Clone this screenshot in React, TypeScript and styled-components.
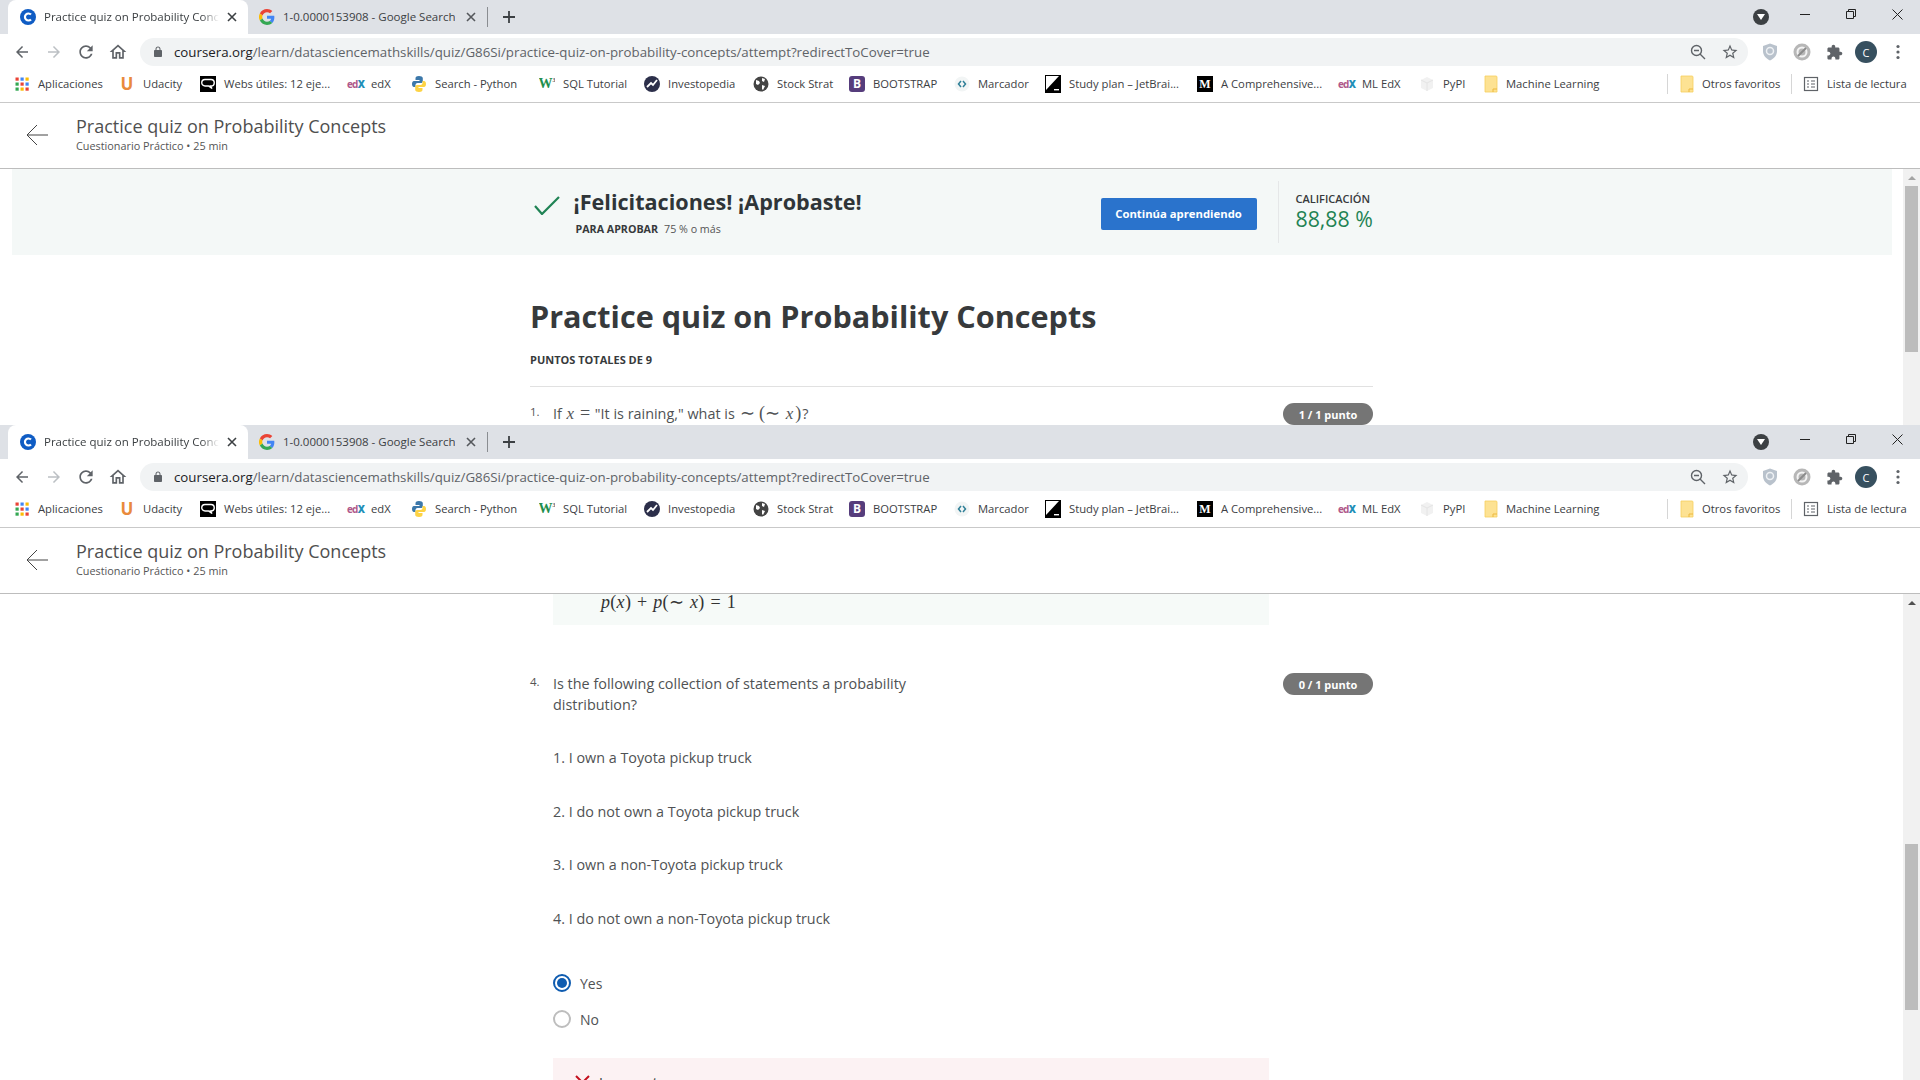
import React from "react";
import styled, { createGlobalStyle } from "styled-components";

const Global = createGlobalStyle`
  html, body { margin: 0; padding: 0; background: #fff; overflow: hidden; }
  body { font-family: "Open Sans", "Noto Sans", sans-serif; }
  * { box-sizing: border-box; }
`;

const Page = styled.div`
  width: 1920px;
  height: 1080px;
  display: flex;
  flex-direction: column;
  overflow: hidden;
`;
const Window = styled.section<{ $h: number }>`
  height: ${(p) => p.$h}px;
  flex: none;
  display: flex;
  flex-direction: column;
  overflow: hidden;
  background: #fff;
`;
const TabStrip = styled.div`
  height: 34px;
  flex: none;
  background: #dee1e6;
  display: flex;
  align-items: stretch;
  padding-left: 8px;
`;
const ActiveTab = styled.div`
  width: 240px;
  height: 34px;
  background: #fff;
  border-radius: 8px 8px 0 0;
  display: flex;
  align-items: center;
  padding-left: 12px;
  gap: 8px;
  font-size: 11.5px;
  color: #3c4043;
  position: relative;
  white-space: nowrap;
`;
const Tab = styled(ActiveTab)`
  background: transparent;
  width: 239px;
  padding-left: 11px;
`;
const TabLabel = styled.span<{ $w: number; $fade?: boolean }>`
  width: ${(p) => p.$w}px;
  overflow: hidden;
  flex: none;
  margin-top: -1px;
  ${(p) => (p.$fade ? "margin-right: -3px; -webkit-mask-image: linear-gradient(to right, #000 90%, transparent 100%);" : "")}
`;
const TabClose = styled.span`
  display: flex;
  width: 12px;
  height: 12px;
  flex: none;
  margin-left: 2px;
`;
const TabDivider = styled.div`
  width: 1px;
  height: 20px;
  background: #8a8d91;
  align-self: center;
  flex: none;
`;
const NewTab = styled.div`
  width: 42px;
  flex: none;
  display: flex;
  align-items: center;
  justify-content: center;
`;
const Controls = styled.div`
  margin-left: auto;
  display: flex;
  align-items: flex-start;
`;
const ProfileDrop = styled.div`
  width: 16px;
  height: 16px;
  border-radius: 50%;
  background: #3c4043;
  margin: 9px 13px 0 0;
  display: flex;
  align-items: center;
  justify-content: center;
`;
const WinBtn = styled.div`
  width: 46px;
  height: 28px;
  display: flex;
  align-items: center;
  justify-content: center;
`;
const NavBar = styled.div`
  height: 36px;
  flex: none;
  display: flex;
  align-items: center;
  padding: 0 5px 0 6px;
  background: #fff;
`;
const NavSlot = styled.div`
  width: 32px;
  height: 28px;
  flex: none;
  display: flex;
  align-items: center;
  justify-content: center;
`;
const Omnibox = styled.div`
  width: 1608px;
  height: 28px;
  margin: 0 6px;
  flex: none;
  border-radius: 14px;
  background: #f1f3f4;
  display: flex;
  align-items: center;
  padding: 0 9px 0 12px;
  gap: 10px;
  font-size: 13.3px;
  color: #5f6368;
  white-space: nowrap;
`;
const Host = styled.span`
  color: #202124;
`;
const OmniEnd = styled.div`
  margin-left: auto;
  display: flex;
  align-items: center;
  gap: 15px;
`;
const Avatar = styled.div`
  width: 22px;
  height: 22px;
  border-radius: 50%;
  background: #37505f;
  color: #fff;
  font-size: 11px;
  display: flex;
  align-items: center;
  justify-content: center;
`;
const BookmarkBar = styled.div`
  height: 33px;
  flex: none;
  display: flex;
  align-items: center;
  padding: 0 0 5px 14px;
  border-bottom: 1px solid #c9c9c9;
  background: #fff;
`;
const Bookmark = styled.div<{ $w: number }>`
  width: ${(p) => p.$w}px;
  flex: none;
  display: flex;
  align-items: center;
  gap: 8px;
  font-size: 11.25px;
  color: #3c4043;
  white-space: nowrap;
`;
const BookmarkSep = styled.div<{ $after: number }>`
  width: 1px;
  height: 20px;
  flex: none;
  background: #d6d6d6;
  margin-right: ${(p) => p.$after}px;
`;
const BIcon = styled.span<{ $bg: string; $c: string; $serif?: boolean; $r?: number; $fs?: number }>`
  width: 16px;
  height: 16px;
  flex: none;
  display: flex;
  align-items: center;
  justify-content: center;
  background: ${(p) => p.$bg};
  color: ${(p) => p.$c};
  border-radius: ${(p) => p.$r ?? 0}px;
  font-family: ${(p) => (p.$serif ? '"Liberation Serif", serif' : '"Open Sans", sans-serif')};
  font-weight: 700;
  font-size: ${(p) => p.$fs ?? 12}px;
  line-height: 1;
  overflow: hidden;
`;
const Sup = styled.span`
  font-size: 6px;
  color: #555;
  align-self: flex-start;
  margin-top: 1px;
`;
const EdxIcon = styled.span`
  width: 16px;
  flex: none;
  font-size: 10px;
  font-weight: 700;
  letter-spacing: -0.8px;
  color: #b0588a;
  line-height: 16px;
  & b { color: #1f8fb8; }
`;
const SvgBox = styled.svg`
  display: block;
  flex: none;
`;
const TopHeader = styled.header`
  height: 66px;
  flex: none;
  display: flex;
  align-items: flex-start;
  border-bottom: 1px solid #bdbdbd;
  background: #fff;
  padding-left: 26px;
`;
const BackArrow = styled.div`
  width: 22px;
  margin-top: 21px;
  flex: none;
`;
const HeaderText = styled.div`
  margin: 11px 0 0 28px;
  display: flex;
  flex-direction: column;
`;
const HeaderTitle = styled.div`
  font-size: 18px;
  line-height: 24px;
  color: #4f4f4f;
`;
const HeaderSub = styled.div`
  font-size: 10.85px;
  line-height: 15px;
  color: #555;
`;
const Body = styled.div`
  flex: 1;
  min-height: 0;
  display: flex;
  overflow: hidden;
`;
const Scroll = styled.div`
  flex: 1;
  min-width: 0;
  overflow: hidden;
`;
const Track = styled.div`
  width: 17px;
  flex: none;
  background: #f1f1f1;
  display: flex;
  flex-direction: column;
  align-items: center;
`;
const Up = styled.div<{ $c: string }>`
  width: 0;
  height: 0;
  margin-top: 7px;
  border-left: 4px solid transparent;
  border-right: 4px solid transparent;
  border-bottom: 4px solid ${(p) => p.$c};
  flex: none;
`;
const Thumb = styled.div<{ $top: number; $h: number }>`
  width: 13px;
  height: ${(p) => p.$h}px;
  margin-top: ${(p) => p.$top}px;
  background: #bcbcbc;
  flex: none;
`;
const Banner = styled.div`
  height: 86px;
  margin: 0 11px 0 12px;
  background: #f4f8f7;
`;
const Col = styled.div`
  width: 843px;
  margin: 0 auto;
`;
const BannerInner = styled(Col)`
  height: 86px;
  display: flex;
  align-items: flex-start;
`;
const Check = styled.div`
  width: 43px;
  flex: none;
  padding: 27px 0 0 3px;
`;
const BannerText = styled.div`
  display: flex;
  flex-direction: column;
  padding-top: 16px;
`;
const BannerTitle = styled.div`
  font-size: 21.6px;
  line-height: 34px;
  font-weight: 700;
  color: #2f3538;
`;
const Pass = styled.div`
  margin: 3px 0 0 2px;
  font-size: 10.7px;
  line-height: 15px;
  color: #555;
  & b { color: #373a3c; font-weight: 700; margin-right: 6px; }
`;
const Cta = styled.button`
  margin: 29px 0 0 auto;
  width: 156px;
  height: 32px;
  border: 0;
  border-radius: 2px;
  background: #2a73cc;
  color: #fff;
  font: 700 11.3px "Open Sans", sans-serif;
  padding: 0 0 2px;
  flex: none;
`;
const Grade = styled.div`
  margin: 12px 0 0 21px;
  height: 62px;
  width: 96px;
  border-left: 1px solid #e5e7e8;
  padding: 11px 0 0 17px;
  flex: none;
`;
const GradeLabel = styled.div`
  font-size: 11px;
  font-weight: 600;
  line-height: 13px;
  color: #373a3c;
  white-space: nowrap;
`;
const GradeValue = styled.div`
  font-size: 21.3px;
  line-height: 28px;
  color: #1f8354;
  white-space: nowrap;
`;
const H1 = styled.h1`
  margin: 38px 0 0;
  font-size: 30.6px;
  line-height: 46px;
  font-weight: 700;
  color: #373a3c;
  white-space: nowrap;
`;
const Total = styled.div`
  margin-top: 13px;
  font-size: 11px;
  font-weight: 700;
  line-height: 16px;
  color: #373a3c;
`;
const Rule = styled.hr`
  margin: 18px 0 0;
  border: 0;
  border-top: 1px solid #e1e1e1;
`;
const QRow = styled.div<{ $top: number }>`
  margin-top: ${(p) => p.$top}px;
  display: flex;
  align-items: flex-start;
`;
const QNum = styled.div`
  width: 23px;
  flex: none;
  font-size: 11.5px;
  line-height: 17px;
  color: #555;
`;
const QText = styled.div<{ $w: number }>`
  width: ${(p) => p.$w}px;
  font-size: 14.4px;
  line-height: 21px;
  color: #4f5254;
`;
const Badge = styled.div`
  margin-left: auto;
  width: 90px;
  height: 22px;
  border-radius: 11px;
  background: #757575;
  color: #fff;
  font-size: 11px;
  font-weight: 700;
  display: flex;
  align-items: center;
  justify-content: center;
  flex: none;
`;
const Mi = styled.i`
  font-family: "Liberation Serif", serif;
  font-size: 17px;
  margin: 0 1px;
`;
const Mn = styled.span`
  font-family: "Liberation Serif", serif;
  font-size: 18px;
  margin: 0 1px;
`;
const Feedback = styled.div`
  margin-left: 23px;
  width: 716px;
  height: 31px;
  padding-left: 48px;
  background: #f6faf8;
  font-family: "Liberation Serif", serif;
  font-size: 18px;
  line-height: 16px;
  letter-spacing: 0.3px;
  word-spacing: 1px;
  color: #333;
`;
const Indented = styled.div`
  margin-left: 23px;
  width: 716px;
`;
const Statement = styled.p`
  margin: 32.4px 0 0;
  font-size: 14.35px;
  line-height: 21px;
  color: #4f5254;
`;
const Options = styled.div`
  margin-top: 37px;
`;
const Option = styled.div`
  height: 36px;
  display: flex;
  align-items: center;
  gap: 9px;
  font-size: 14px;
  color: #4f5254;
`;
const Radio = styled.span<{ $on?: boolean }>`
  width: 18px;
  height: 18px;
  border-radius: 50%;
  border: 2px solid ${(p) => (p.$on ? "#0f5cb0" : "#bdbdbd")};
  flex: none;
  margin-top: -2px;
  display: flex;
  align-items: center;
  justify-content: center;
  &::after {
    content: "";
    width: 10px;
    height: 10px;
    border-radius: 50%;
    background: ${(p) => (p.$on ? "#0f5cb0" : "transparent")};
  }
`;
const Wrong = styled.div`
  margin-top: 20px;
  height: 60px;
  background: #fcf2f3;
  padding: 17px 0 0 22px;
  display: flex;
  gap: 9px;
  font-size: 14px;
  line-height: 21px;
  color: #373a3c;
`;
const WrongLabel = styled.span`
  margin-top: -3px;
`;

const I = ({ d, size = 16, fill = "#5f6368", vb = 24 }: { d: string; size?: number; fill?: string; vb?: number }) => (
  <SvgBox width={size} height={size} viewBox={`0 0 ${vb} ${vb}`}><path d={d} fill={fill} /></SvgBox>
);
const P = {
  back: "M20 11H7.830l5.590-5.590L12 4l-8 8 8 8 1.410-1.410L7.830 13H20v-2z",
  fwd: "M4 11h12.170l-5.590-5.590L12 4l8 8-8 8-1.410-1.410L16.170 13H4v-2z",
  reload: "M17.650 6.350C16.200 4.900 14.210 4 12 4c-4.420 0-7.990 3.580-7.990 8s3.570 8 7.990 8c3.730 0 6.840-2.550 7.730-6h-2.080c-.82 2.330-3.040 4-5.650 4-3.310 0-6-2.690-6-6s2.690-6 6-6c1.660 0 3.140.69 4.220 1.780L13 11h7V4l-2.350 2.350z",
  home: "M12 5.690l5 4.500V18h-2v-6H9v6H7v-7.810l5-4.500M12 3L2 12h3v8h6v-6h2v6h6v-8h3L12 3z",
  lock: "M18 8h-1V6c0-2.760-2.240-5-5-5S7 3.240 7 6v2H6c-1.100 0-2 .9-2 2v10c0 1.100.9 2 2 2h12c1.100 0 2-.9 2-2V10c0-1.100-.9-2-2-2zm-6-5c1.660 0 3 1.340 3 3v2H9V6c0-1.660 1.340-3 3-3z",
  star: "M22 9.240l-7.190-.62L12 2 9.190 8.630 2 9.240l5.460 4.730L5.820 21 12 17.270 18.180 21l-1.630-7.030L22 9.240zM12 15.400l-3.760 2.270 1-4.280-3.320-2.880 4.380-.38L12 6.100l1.710 4.040 4.380.38-3.320 2.880 1 4.280L12 15.400z",
  puzzle: "M20.500 11H19V7c0-1.100-.9-2-2-2h-4V3.500C13 2.120 11.880 1 10.500 1S8 2.120 8 3.500V5H4c-1.100 0-1.990.9-1.990 2v3.800H3.500c1.490 0 2.700 1.210 2.700 2.700s-1.210 2.700-2.700 2.700H2V20c0 1.100.9 2 2 2h3.800v-1.500c0-1.490 1.210-2.700 2.700-2.700 1.490 0 2.700 1.210 2.700 2.700V22H17c1.100 0 2-.9 2-2v-4h1.500c1.380 0 2.500-1.120 2.500-2.500S21.880 11 20.500 11z",
};
const Stroke = ({ d, size = 12, vb = 12, c = "#3c4043", w = 1.6 }: { d: string; size?: number; vb?: number; c?: string; w?: number }) => (
  <SvgBox width={size} height={size} viewBox={`0 0 ${vb} ${vb}`}><path d={d} fill="none" stroke={c} strokeWidth={w} /></SvgBox>
);
const CourseraFav = () => (
  <SvgBox width={16} height={16} viewBox="0 0 16 16">
    <circle cx="8" cy="8" r="8" fill="#0f5cc4" />
    <path d="M11 5.600A3.500 3.500 0 1 0 11 10.400" fill="none" stroke="#fff" strokeWidth="2.200" />
  </SvgBox>
);
const GoogleFav = () => (
  <SvgBox width={16} height={16} viewBox="0 0 48 48">
    <path fill="#EA4335" d="M24 9.500c3.500 0 6.700 1.200 9.200 3.600l6.900-6.900C35.900 2.400 30.500 0 24 0 14.600 0 6.500 5.400 2.600 13.200l8 6.200C12.500 13.700 17.800 9.500 24 9.500z" />
    <path fill="#4285F4" d="M46.100 24.500c0-1.600-.1-3.100-.4-4.500H24v9h12.400c-.5 2.900-2.200 5.300-4.600 7l7.700 6c4.500-4.200 6.600-10.300 6.600-17.500z" />
    <path fill="#FBBC05" d="M10.500 28.600A14.500 14.500 0 0 1 10.500 19.400l-8-6.200a24 24 0 0 0 0 21.600l8-6.200z" />
    <path fill="#34A853" d="M24 48c6.500 0 11.900-2.100 15.900-5.800l-7.700-6c-2.200 1.400-4.900 2.300-8.200 2.300-6.200 0-11.500-4.200-13.400-9.900l-8 6.200C6.500 42.600 14.600 48 24 48z" />
  </SvgBox>
);
const Apps = () => (
  <SvgBox width={16} height={16} viewBox="0 0 16 16">
    {[0, 1, 2].map((r) => [0, 1, 2].map((c) => (
      <rect key={`${r}${c}`} x={1.5 + c * 5} y={1.5 + r * 5} width="3.2" height="3.2"
        fill={[["#ea4335", "#4285f4", "#fbbc05"], ["#34a853", "#ea4335", "#4285f4"], ["#34a853", "#fbbc05", "#ea4335"]][r][c]} />
    )))}
  </SvgBox>
);
const Folder = () => (
  <SvgBox width={14} height={18} viewBox="0 0 14 18">
    <path d="M1 1h11a1 1 0 0 1 1 1v15H1z" fill="#fde293" stroke="#f6cf5e" strokeWidth=".8" />
    <path d="M9 17v-3h4" fill="none" stroke="#ecb93e" strokeWidth="1" />
  </SvgBox>
);
const Python = () => (
  <SvgBox width={16} height={18} viewBox="0 0 16 18">
    <path d="M8 1C5 1 4.500 2 4.500 3.500V5H8.500V6H3C1.500 6 1 7.500 1 9s.5 3 2 3h1.500v-2c0-1.200 1-2 2-2h3.500c1 0 1.800-.8 1.800-1.800V3C11.800 1.700 10 1 8 1z" fill="#3c78aa" />
    <path d="M8 17c3 0 3.500-1 3.500-2.500V13H7.500v-1H13c1.500 0 2-1.500 2-3s-.5-3-2-3h-1.500v2c0 1.200-1 2-2 2H6c-1 0-1.800.8-1.800 1.800V15c0 1.300 1.800 2 3.800 2z" fill="#fdd344" />
  </SvgBox>
);
const Bubble = () => (
  <SvgBox width={16} height={16} viewBox="0 0 16 16">
    <rect width="16" height="16" fill="#000" />
    <path d="M5 3.500h6a2.800 2.800 0 0 1 0 6.500h-.5l1.500 2.500-3.500-2.500H5a2.800 2.800 0 0 1 0-6.500z" fill="none" stroke="#fff" strokeWidth="1.400" />
  </SvgBox>
);
const Globe = () => (
  <SvgBox width={16} height={16} viewBox="0 0 16 16">
    <circle cx="8" cy="8" r="7.500" fill="#444" />
    <path d="M3 4l3 1 1 2-2 2-2-1zM9 2l3 1-1 3-2-1zM9 9l3 1-2 4-1-1z" fill="#fff" />
  </SvgBox>
);
const Invest = () => (
  <SvgBox width={16} height={16} viewBox="0 0 16 16">
    <circle cx="8" cy="8" r="8" fill="#2c2f4a" />
    <path d="M3 11l4-4 2 2 4-5" fill="none" stroke="#fff" strokeWidth="1.800" />
  </SvgBox>
);
const Marcador = () => (
  <SvgBox width={16} height={16} viewBox="0 0 16 16">
    <circle cx="8" cy="8" r="7.500" fill="#f2f5f5" />
    <path d="M7 5L4.500 8 7 11M9 5l2.500 3L9 11" fill="none" stroke="#2f7f97" strokeWidth="1.500" />
  </SvgBox>
);
const Study = () => (
  <SvgBox width={16} height={18} viewBox="0 0 16 18">
    <rect width="16" height="18" y="0" fill="#000" />
    <path d="M1 1h13L1 15z" fill="#fff" />
    <rect x="9" y="14" width="5" height="1.400" fill="#fff" />
  </SvgBox>
);
const Pypi = () => (
  <SvgBox width={16} height={16} viewBox="0 0 16 16">
    <path d="M2 4l6-3 6 3v8l-6 3-6-3z" fill="#f1f1f1" />
    <path d="M2 4l6 3 6-3M8 7v8" fill="none" stroke="#e4e4e4" />
  </SvgBox>
);
const ListIcon = () => (
  <SvgBox width={16} height={16} viewBox="0 0 16 16">
    <rect x="1.500" y="1.500" width="13" height="13" fill="none" stroke="#5f6368" strokeWidth="1.200" />
    <path d="M4 5h2M4 8h2M4 11h2M8 5h4M8 8h4M8 11h4" stroke="#5f6368" strokeWidth="1.200" />
  </SvgBox>
);
const Shield = () => (
  <SvgBox width={16} height={18} viewBox="0 0 16 18">
    <path d="M8 .5l7 2.500v5c0 4.500-3 7.500-7 9.500-4-2-7-5-7-9.500V3z" fill="#b9c2cc" />
    <circle cx="8" cy="8" r="3.500" fill="none" stroke="#eef1f4" strokeWidth="1.500" />
  </SvgBox>
);
const GreyExt = () => (
  <SvgBox width={18} height={18} viewBox="0 0 18 18">
    <circle cx="9" cy="9" r="8.500" fill="#b7b7b7" />
    <circle cx="9" cy="9" r="4.500" fill="none" stroke="#f3f3f3" strokeWidth="2" />
    <path d="M5 13L13 5" stroke="#8b8b8b" strokeWidth="2" />
  </SvgBox>
);
const Kebab = () => (
  <SvgBox width={4} height={16} viewBox="0 0 4 16">
    <circle cx="2" cy="2.500" r="1.600" fill="#5f6368" /><circle cx="2" cy="8" r="1.600" fill="#5f6368" /><circle cx="2" cy="13.500" r="1.600" fill="#5f6368" />
  </SvgBox>
);

const bookmarks: { w: number; label: string; icon: React.ReactNode }[] = [
  { w: 105, label: "Aplicaciones", icon: <Apps /> },
  { w: 81, label: "Udacity", icon: <BIcon $bg="transparent" $c="#e98a3c" $fs={17}>U</BIcon> },
  { w: 147, label: "Webs útiles: 12 eje...", icon: <Bubble /> },
  { w: 64, label: "edX", icon: <EdxIcon>ed<b>X</b></EdxIcon> },
  { w: 128, label: "Search - Python", icon: <Python /> },
  { w: 105, label: "SQL Tutorial", icon: <BIcon $bg="transparent" $c="#1f8f4e" $serif $fs={14}>W<Sup>3</Sup></BIcon> },
  { w: 109, label: "Investopedia", icon: <Invest /> },
  { w: 96, label: "Stock Strat", icon: <Globe /> },
  { w: 105, label: "BOOTSTRAP", icon: <BIcon $bg="#563d7c" $c="#fff" $r={3}>B</BIcon> },
  { w: 91, label: "Marcador", icon: <Marcador /> },
  { w: 152, label: "Study plan – JetBrai...", icon: <Study /> },
  { w: 141, label: "A Comprehensive...", icon: <BIcon $bg="#000" $c="#fff" $serif>M</BIcon> },
  { w: 81, label: "ML EdX", icon: <EdxIcon>ed<b>X</b></EdxIcon> },
  { w: 65, label: "PyPI", icon: <Pypi /> },
  { w: 183, label: "Machine Learning", icon: <Folder /> },
];

const Chrome = () => (
  <>
    <TabStrip>
      <ActiveTab>
        <CourseraFav />
        <TabLabel $w={175} $fade>Practice quiz on Probability Concepts</TabLabel>
        <TabClose><Stroke d="M2 2l8 8M10 2l-8 8" c="#3c4043" /></TabClose>
      </ActiveTab>
      <Tab>
        <GoogleFav />
        <TabLabel $w={172}>1-0.0000153908 - Google Search</TabLabel>
        <TabClose><Stroke d="M2 2l8 8M10 2l-8 8" c="#55585c" /></TabClose>
      </Tab>
      <TabDivider />
      <NewTab><Stroke d="M7 1v12M1 7h12" size={14} vb={14} c="#3c4043" w={1.8} /></NewTab>
      <Controls>
        <ProfileDrop><SvgBox width={8} height={6} viewBox="0 0 8 6"><path d="M0 0h8L4 6z" fill="#fff" /></SvgBox></ProfileDrop>
        <WinBtn><Stroke d="M0 5.500h10" size={10} vb={10} w={1} c="#222" /></WinBtn>
        <WinBtn><Stroke d="M.5 2.500h7v7h-7zM2.500 2.500v-2h7v7h-2" size={10} vb={10} w={1} c="#222" /></WinBtn>
        <WinBtn><Stroke d="M.5.500l10 10M10.500.500l-10 10" size={11} vb={11} w={1} c="#222" /></WinBtn>
      </Controls>
    </TabStrip>
    <NavBar>
      <NavSlot><I d={P.back} size={18} /></NavSlot>
      <NavSlot><I d={P.fwd} size={18} fill="#bcc0c4" /></NavSlot>
      <NavSlot><I d={P.reload} size={20} /></NavSlot>
      <NavSlot><I d={P.home} size={20} /></NavSlot>
      <Omnibox>
        <I d={P.lock} size={12} />
        <span><Host>coursera.org</Host>/learn/datasciencemathskills/quiz/G86Si/practice-quiz-on-probability-concepts/attempt?redirectToCover=true</span>
        <OmniEnd>
          <SvgBox width={16} height={16} viewBox="0 0 16 16">
            <circle cx="6.500" cy="6.500" r="5" fill="none" stroke="#5f6368" strokeWidth="1.400" />
            <path d="M10 10l5 5M4 6.500h5" stroke="#5f6368" strokeWidth="1.400" />
          </SvgBox>
          <I d={P.star} size={18} />
        </OmniEnd>
      </Omnibox>
      <NavSlot><Shield /></NavSlot>
      <NavSlot><GreyExt /></NavSlot>
      <NavSlot><I d={P.puzzle} size={17} /></NavSlot>
      <NavSlot><Avatar>C</Avatar></NavSlot>
      <NavSlot><Kebab /></NavSlot>
    </NavBar>
    <BookmarkBar>
      {bookmarks.map((b) => (
        <Bookmark key={b.label} $w={b.w}>{b.icon}<span>{b.label}</span></Bookmark>
      ))}
      <BookmarkSep $after={12} />
      <Bookmark $w={111}><Folder /><span>Otros favoritos</span></Bookmark>
      <BookmarkSep $after={11} />
      <Bookmark $w={116}><ListIcon /><span>Lista de lectura</span></Bookmark>
    </BookmarkBar>
    <TopHeader>
      <BackArrow>
        <SvgBox width={22} height={22} viewBox="0 0 22 22">
          <path d="M22 11H1M11 1L1 11l10 10" fill="none" stroke="#444" strokeWidth="1" />
        </SvgBox>
      </BackArrow>
      <HeaderText>
        <HeaderTitle>Practice quiz on Probability Concepts</HeaderTitle>
        <HeaderSub>Cuestionario Práctico • 25 min</HeaderSub>
      </HeaderText>
    </TopHeader>
  </>
);

export default function App() {
  return (
    <Page>
      <Global />
      <Window $h={425}>
        <Chrome />
        <Body>
          <Scroll>
            <Banner>
              <BannerInner>
                <Check>
                  <SvgBox width={26} height={19} viewBox="0 0 26 19">
                    <path d="M1 10l7 8L25 1" fill="none" stroke="#1f8354" strokeWidth="2.200" />
                  </SvgBox>
                </Check>
                <BannerText>
                  <BannerTitle>¡Felicitaciones! ¡Aprobaste!</BannerTitle>
                  <Pass><b>PARA APROBAR</b>75 % o más</Pass>
                </BannerText>
                <Cta>Continúa aprendiendo</Cta>
                <Grade>
                  <GradeLabel>CALIFICACIÓN</GradeLabel>
                  <GradeValue>88,88 %</GradeValue>
                </Grade>
              </BannerInner>
            </Banner>
            <Col>
              <H1>Practice quiz on Probability Concepts</H1>
              <Total>PUNTOS TOTALES DE 9</Total>
              <Rule />
              <QRow $top={16}>
                <QNum>1.</QNum>
                <QText $w={600}>If <Mi>x</Mi> <Mn>=</Mn> "It is raining," what is <Mn>∼ (∼</Mn> <Mi>x</Mi><Mn>)</Mn>?</QText>
                <Badge>1 / 1 punto</Badge>
              </QRow>
            </Col>
          </Scroll>
          <Track>
            <Up $c="#a3a3a3" />
            <Thumb $top={6} $h={166} />
          </Track>
        </Body>
      </Window>
      <Window $h={655}>
        <Chrome />
        <Body>
          <Scroll>
            <Col>
              <Feedback><i>p</i>(<i>x</i>) + <i>p</i>(∼ <i>x</i>) = 1</Feedback>
              <QRow $top={48}>
                <QNum>4.</QNum>
                <QText $w={372}>Is the following collection of statements a probability distribution?</QText>
                <Badge>0 / 1 punto</Badge>
              </QRow>
              <Indented>
                <Statement>1. I own a Toyota pickup truck</Statement>
                <Statement>2. I do not own a Toyota pickup truck</Statement>
                <Statement>3. I own a non-Toyota pickup truck</Statement>
                <Statement>4. I do not own a non-Toyota pickup truck</Statement>
                <Options>
                  <Option><Radio $on />Yes</Option>
                  <Option><Radio />No</Option>
                </Options>
                <Wrong>
                  <Stroke d="M1 1l13 13M14 1L1 14" size={15} vb={15} c="#c4101d" w={2} />
                  <WrongLabel>Incorrecto</WrongLabel>
                </Wrong>
              </Indented>
            </Col>
          </Scroll>
          <Track>
            <Up $c="#505050" />
            <Thumb $top={239} $h={166} />
          </Track>
        </Body>
      </Window>
    </Page>
  );
}
